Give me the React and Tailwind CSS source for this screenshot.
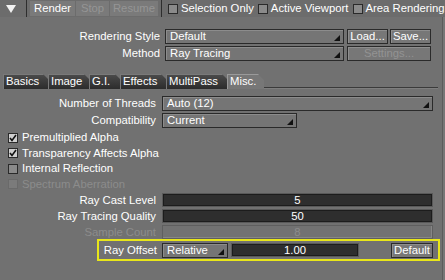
const Arrow = () => (
  <svg width="6" height="6" viewBox="0 0 6 6" className="absolute right-[3px] bottom-[2px]">
    <polygon points="6,0 6,6 0,6" fill="#111" />
  </svg>
);

const Dropdown = ({ value, className = '' }) => (
  <div className={`relative h-[15px] border border-[#2a2a2a] bg-[#757575] shadow-[inset_1px_1px_0_#8c8c8c] pl-[4px] leading-[13px] text-white ${className}`}>
    {value}
    <Arrow />
  </div>
);

const Button = ({ children, disabled, className = '' }) => (
  <div className={`h-[15px] border border-[#2a2a2a] bg-[#777] shadow-[inset_1px_1px_0_#8e8e8e] leading-[13px] text-center ${disabled ? 'text-[#939393]' : 'text-white'} ${className}`}>
    {children}
  </div>
);

const Box = ({ checked, disabled }) => (
  <div
    className={`w-[10px] h-[10px] border flex items-center justify-center ${
      disabled ? 'border-[#6a6a6a] bg-[#7b7b7b]' : checked ? 'border-[#2a2a2a] bg-[#cfcfcf]' : 'border-[#2a2a2a] bg-[#8a8a8a]'
    }`}
  >
    {checked && (
      <svg width="8" height="8" viewBox="0 0 8 8">
        <polyline points="1,4 3,6.5 7,1" fill="none" stroke="#111" strokeWidth="1.6" />
      </svg>
    )}
  </div>
);

const Tab = ({ label, w, active }) => (
  <div
    className={`h-[15px] ${w} -mr-[1px] leading-[15px] pl-[3px] text-white [clip-path:polygon(0_0,calc(100%-6px)_0,100%_6px,100%_100%,0_100%)] ${
      active ? 'bg-[#777] shadow-[inset_1px_1px_0_#9a9a9a]' : 'bg-gradient-to-b from-[#4c4c4c] to-[#2c2c2c] shadow-[inset_1px_1px_0_#7a7a7a]'
    }`}
  >
    {label}
  </div>
);

const Slider = ({ value, disabled }) => (
  <div
    className={`h-[14px] w-[271px] border text-center leading-[12px] ${
      disabled ? 'border-[#5f5f5f] bg-[#727272] text-[#8c8c8c] shadow-[inset_-1px_-1px_0_#868686]' : 'border-[#595959] bg-[#2e2e2e] text-white shadow-[inset_0_0_0_1px_#1c1c1c]'
    }`}
  >
    {value}
  </div>
);

const Row = ({ label, children, dim }) => (
  <div className="flex items-center h-[16px]">
    <div className={`w-[157px] text-right pr-[1px] ${dim ? 'text-[#8c8c8c]' : 'text-white'}`}>{label}</div>
    <div className="ml-[5px] flex items-center">{children}</div>
  </div>
);

const CheckRow = ({ label, checked, disabled }) => (
  <div className="flex items-center h-[15.5px] pl-[8px]">
    <Box checked={checked} disabled={disabled} />
    <span className={`ml-[4px] ${disabled ? 'text-[#8c8c8c]' : 'text-white'}`}>{label}</span>
  </div>
);

export default function App() {
  return (
    <div className="w-[445px] h-[280px] bg-[#717171] text-[11.3px] text-white overflow-hidden flex flex-col [font-family:'Liberation_Sans',Arial,sans-serif]">
      {/* top toolbar */}
      <div className="h-[17px] flex items-center bg-[#6c6c6c]">
        <div className="w-[26px] h-full flex items-center pl-[6px]">
          <svg width="10" height="8" viewBox="0 0 10 8">
            <polygon points="0,0 10,0 5,8" fill="#f2f2f2" />
          </svg>
        </div>
        <div className="w-px h-full bg-[#2e2e2e]" />
        <div className="ml-[3px] flex gap-[1px] h-[15px]">
          <div className="w-[45px] bg-[#7a7a7a] text-center leading-[15px]">Render</div>
          <div className="w-[33px] bg-[#7a7a7a] text-center leading-[15px] text-[#959595]">Stop</div>
          <div className="w-[48px] bg-[#7a7a7a] text-center leading-[15px] text-[#959595]">Resume</div>
        </div>
        <div className="ml-[3px] w-px h-full bg-[#2e2e2e]" />
        <div className="ml-[6px] flex items-center gap-[3px]">
          <Box />
          <span>Selection Only</span>
        </div>
        <div className="ml-[4px] flex items-center gap-[3px]">
          <Box />
          <span>Active Viewport</span>
        </div>
        <div className="ml-[4px] flex items-center gap-[3px]">
          <Box />
          <span>Area Rendering</span>
        </div>
      </div>

      <div className="flex flex-1">
        <div className="w-[442px] flex flex-col">
          <div className="mt-[12px] flex flex-col gap-[2px]">
            <div className="flex items-center h-[15px]">
              <div className="w-[160px] text-right">Rendering Style</div>
              <Dropdown value="Default" className="ml-[5px] w-[179px]" />
              <Button className="ml-[3px] w-[41px]">Load...</Button>
              <Button className="ml-[2px] w-[41px]">Save...</Button>
            </div>
            <div className="flex items-center h-[15px]">
              <div className="w-[160px] text-right">Method</div>
              <Dropdown value="Ray Tracing" className="ml-[5px] w-[179px]" />
              <Button disabled className="ml-[3px] w-[84px]">Settings...</Button>
            </div>
          </div>

          {/* tabs */}
          <div className="mt-[13px] flex items-end pl-[3px] h-[15px]">
            <Tab label="Basics" w="w-[46px]" />
            <Tab label="Image" w="w-[42px]" />
            <Tab label="G.I." w="w-[32px]" />
            <Tab label="Effects" w="w-[47px]" />
            <Tab label="MultiPass" w="w-[62px]" />
            <Tab label="Misc." w="w-[37px]" active />
            <div className="flex-1 h-[2px] bg-[#3a3a3a] border-b border-[#7e7e7e] mr-[4px]" />
          </div>

          <div className="mt-[6px] flex flex-col">
            <Row label="Number of Threads">
              <Dropdown value="Auto (12)" className="w-[271px]" />
            </Row>
            <div className="mt-[1px]">
              <Row label="Compatibility">
                <Dropdown value="Current" className="w-[135px]" />
              </Row>
            </div>
            <div className="mt-[2px]">
              <CheckRow label="Premultiplied Alpha" checked />
              <CheckRow label="Transparency Affects Alpha" checked />
              <CheckRow label="Internal Reflection" />
              <CheckRow label="Spectrum Aberration" disabled />
            </div>
            <Row label="Ray Cast Level">
              <Slider value="5" />
            </Row>
            <Row label="Ray Tracing Quality">
              <Slider value="50" />
            </Row>
            <Row label="Sample Count" dim>
              <Slider value="8" disabled />
            </Row>
            <div className="ml-[97px] -mt-[1px] w-[343px] h-[22px] border-2 border-[#e8e61a] flex items-center">
              <div className="w-[58px] text-right">Ray Offset</div>
              <Dropdown value="Relative" className="ml-[5px] w-[66px]" />
              <div className="ml-[3px] w-[128px] h-[14px] border border-[#595959] bg-[#2e2e2e] shadow-[inset_0_0_0_1px_#1c1c1c] text-center leading-[12px]">
                1.00
              </div>
              <Button className="ml-auto mr-[5px] w-[42px]">Default</Button>
            </div>
          </div>
        </div>
        <div className="flex-1 border-l border-[#5c5c5c] bg-[#777]" />
      </div>
    </div>
  );
}
